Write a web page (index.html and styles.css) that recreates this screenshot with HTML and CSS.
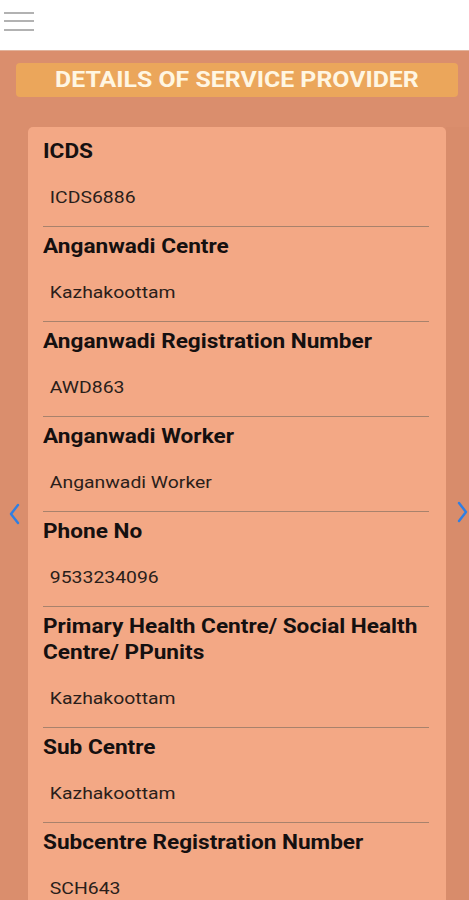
FILE: index.html
```html
<!DOCTYPE html>
<html>
<head>
<meta charset="utf-8">
<link rel="stylesheet" href="styles.css">
</head>
<body>
<header class="topbar">
  <svg class="menu" width="36" height="36" viewBox="0 0 36 36">
    <rect x="4" y="12" width="30" height="2" fill="#b2b2b2"/>
    <rect x="4" y="20" width="30" height="2" fill="#b2b2b2"/>
    <rect x="4" y="29" width="30" height="2" fill="#b2b2b2"/>
  </svg>
</header>
<main class="screen">
  <div class="banner"><span class="banner-text">DETAILS OF SERVICE PROVIDER</span></div>
  <div class="pager">
    <div class="nav nav-left">
      <svg width="12" height="22" viewBox="0 0 12 22"><path d="M10 2 L3 11 L10 20" fill="none" stroke="#2f7fe3" stroke-width="2.4" stroke-linecap="round" stroke-linejoin="round"/></svg>
    </div>
    <div class="card">
      <div class="row"><div class="label">ICDS</div><div class="value">ICDS6886</div></div>
      <div class="row"><div class="label">Anganwadi Centre</div><div class="value">Kazhakoottam</div></div>
      <div class="row"><div class="label">Anganwadi Registration Number</div><div class="value">AWD863</div></div>
      <div class="row"><div class="label">Anganwadi Worker</div><div class="value">Anganwadi Worker</div></div>
      <div class="row"><div class="label">Phone No</div><div class="value">9533234096</div></div>
      <div class="row"><div class="label">Primary Health Centre/ Social Health Centre/ PPunits</div><div class="value">Kazhakoottam</div></div>
      <div class="row"><div class="label">Sub Centre</div><div class="value">Kazhakoottam</div></div>
      <div class="row"><div class="label">Subcentre Registration Number</div><div class="value">SCH643</div></div>
    </div>
    <div class="nav nav-right">
      <svg width="12" height="22" viewBox="0 0 12 22"><path d="M2 2 L9 11 L2 20" fill="none" stroke="#2f7fe3" stroke-width="2.4" stroke-linecap="round" stroke-linejoin="round"/></svg>
    </div>
  </div>
</main>
</body>
</html>
```
FILE: styles.css
```css
* { box-sizing: border-box; }
html, body { margin: 0; padding: 0; }
body {
  width: 469px;
  height: 900px;
  overflow: hidden;
  font-family: Roboto, "Liberation Sans", sans-serif;
  background: #da8e6d;
}
.topbar {
  height: 51px;
  background: #ffffff;
  border-bottom: 1px solid #e2b39c;
}
.menu { display: block; }
.screen {
  padding-top: 12px;
}
.banner {
  margin: 0 11px 0 16px;
  height: 34px;
  border-radius: 4px;
  background: #eba65b;
  display: flex;
  justify-content: center;
  align-items: center;
}
.banner-text {
  display: inline-block;
  color: #fff6e2;
  font-weight: 700;
  font-size: 22px;
  line-height: 34px;
  transform: scaleX(1.13);
  transform-origin: center;
  white-space: nowrap;
}
.pager {
  display: flex;
  margin-top: 30px;
}
.nav {
  width: 28px;
  display: flex;
  align-items: flex-start;
  padding-top: 376px;
}
.nav-left { justify-content: center; }
.nav-right {
  width: 23px;
  justify-content: flex-end;
  padding-right: 0;
  background: #d88c6b;
  padding-top: 374px;
}
.card {
  width: 418px;
  background: #f3a885;
  border-radius: 5px 5px 0 0;
  padding: 5px 17px 0 15px;
  height: 800px;
}
.row {
  padding: 6px 0 19px;
  border-bottom: 1px solid #a8826c;
}
.row .label {
  font-weight: 700;
  font-size: 20px;
  line-height: 26px;
  color: #151010;
  width: 340px;
  transform: scaleX(1.13);
  transform-origin: left center;
}
.row .value {
  margin-top: 23px;
  padding-left: 6px;
  font-size: 17px;
  line-height: 20px;
  color: #2a1e1a;
  transform: scaleX(1.14);
  transform-origin: left center;
}
.row:last-child { border-bottom: none; }
```
